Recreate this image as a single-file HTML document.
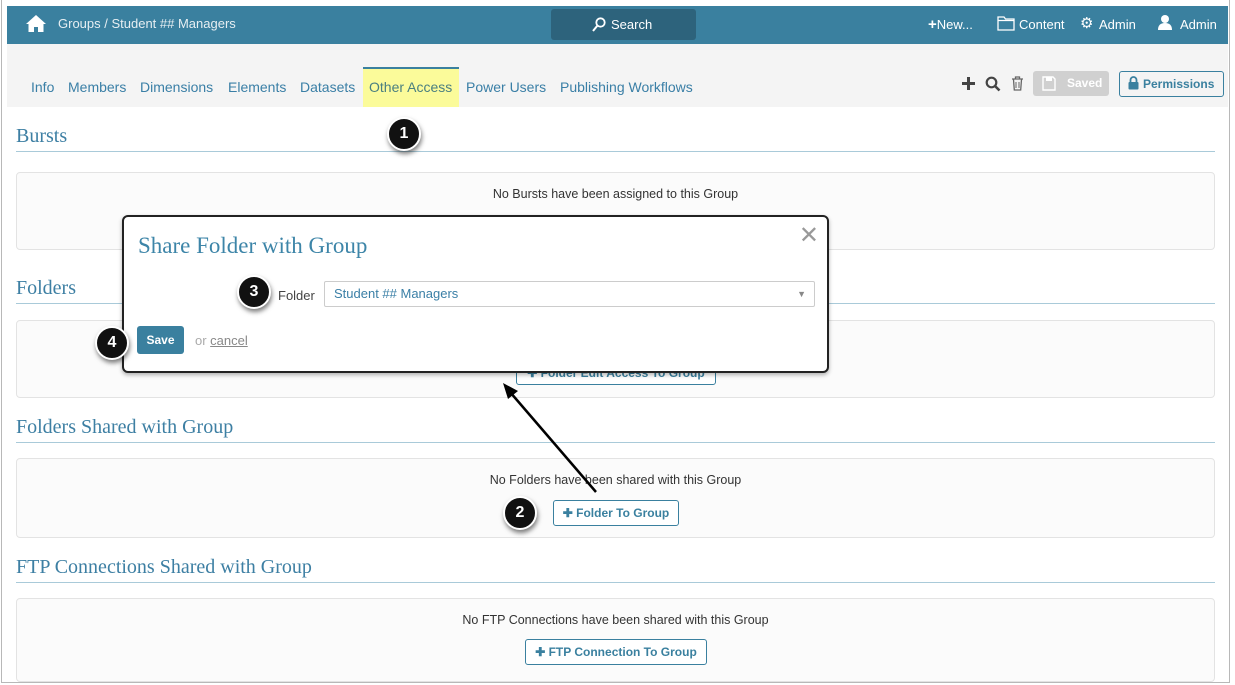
<!DOCTYPE html>
<html><head><meta charset="utf-8"><style>
*{box-sizing:border-box;margin:0;padding:0}
body{width:1235px;height:685px;background:#fff;font-family:"Liberation Sans",sans-serif;position:relative;overflow:hidden}
.frame{position:absolute;left:1px;top:0;width:1229px;height:683px;border:1px solid #b8b8b8;border-top:none;background:#fff}
.hdr{position:absolute;left:7px;top:6px;width:1221px;height:38px;background:#3a809f;color:#fff;font-size:13px}
.tabs{position:absolute;left:7px;top:44px;width:1221px;height:63px;background:#f4f4f4}
.tab{position:absolute;top:79px;font-size:14px;color:#3a7fa6}
.sec{position:absolute;left:16px;font-family:"Liberation Serif",serif;font-size:20px;color:#3d7fa3}
.line{position:absolute;left:16px;width:1199px;height:1px;background:#a9cad9}
.panel{position:absolute;left:16px;width:1199px;border:1px solid #e3e3e3;border-radius:4px;background:#fbfbfb}
.msg{position:absolute;width:100%;text-align:center;font-size:12.5px;color:#333}
.btn{position:absolute;border:1px solid #3a809f;border-radius:3px;background:#fff;color:#3a809f;font-size:12px;font-weight:bold;text-align:center;line-height:24px;height:26px}
.num{position:absolute;width:34px;height:34px;border-radius:50%;background:#111;border:2px solid #fff;box-shadow:1px 3px 5px rgba(0,0,0,.5);color:#fff;font-weight:bold;font-size:16px;text-align:center;line-height:30px}
</style></head><body>
<div class="frame"></div>
<div class="hdr">
<svg style="position:absolute;left:18px;top:8px" width="22" height="19" viewBox="0 0 22 19"><path d="M11 1 L1 10 L3.5 10 L3.5 18 L9 18 L9 13 L13 13 L13 18 L18.5 18 L18.5 10 L21 10 Z" fill="#fff"/></svg>
<span style="position:absolute;left:51px;top:10px;color:#e6eef2">Groups / Student ## Managers</span>
<div style="position:absolute;left:544px;top:3px;width:145px;height:31px;background:#2d637c;border-radius:3px"></div>
<svg style="position:absolute;left:585px;top:11px" width="14" height="15" viewBox="0 0 14 15"><circle cx="8.5" cy="5.5" r="4.2" fill="none" stroke="#fff" stroke-width="1.8"/><line x1="5.5" y1="8.5" x2="1" y2="14" stroke="#fff" stroke-width="2"/></svg>
<span style="position:absolute;left:604px;top:11px">Search</span>
<span style="position:absolute;left:921px;top:10px"><b style="font-size:15px">+</b>New...</span>
<svg style="position:absolute;left:990px;top:10px" width="18" height="15" viewBox="0 0 18 15"><path d="M1 1 H7 L8.5 3 H17 V14 H1 Z M1 4.5 H17" fill="none" stroke="#fff" stroke-width="1.3"/></svg>
<span style="position:absolute;left:1012px;top:11px">Content</span>
<span style="position:absolute;left:1073px;top:8px;font-size:15px">⚙</span><span style="position:absolute;left:1092px;top:11px">Admin</span>
<svg style="position:absolute;left:1150px;top:8px" width="16" height="17" viewBox="0 0 16 17"><circle cx="8" cy="5" r="4" fill="#fff"/><path d="M1 16 Q1 9 8 9 Q15 9 15 16 Z" fill="#fff"/></svg>
<span style="position:absolute;left:1173px;top:11px">Admin</span>
</div>
<div class="tabs"></div>
<div style="position:absolute;left:363px;top:67px;width:96px;height:40px;background:#fbfb9a;border-top:2px solid #3a809f"></div>
<span class="tab" style="left:31px">Info</span><span class="tab" style="left:68px">Members</span><span class="tab" style="left:140px">Dimensions</span><span class="tab" style="left:228px">Elements</span><span class="tab" style="left:300px">Datasets</span><span class="tab" style="left:369px;color:#4a7f80">Other Access</span><span class="tab" style="left:466px">Power Users</span><span class="tab" style="left:560px">Publishing Workflows</span>
<svg style="position:absolute;left:962px;top:77px" width="13" height="13"><path d="M6.5 0V13M0 6.5H13" stroke="#444" stroke-width="3"/></svg>
<svg style="position:absolute;left:985px;top:76px" width="16" height="16"><circle cx="6.5" cy="6.5" r="4.8" fill="none" stroke="#444" stroke-width="2.2"/><line x1="10" y1="10" x2="14.5" y2="14.5" stroke="#444" stroke-width="2.6"/></svg>
<svg style="position:absolute;left:1011px;top:76px" width="13" height="15"><path d="M1 3H12M4.5 3V1H8.5V3M2.5 3.5L3.3 14H9.7L10.5 3.5" fill="none" stroke="#666" stroke-width="1.3"/><path d="M5 6V12M8 6V12" stroke="#666"/></svg>
<div style="position:absolute;left:1033px;top:71px;width:76px;height:25px;background:#d0d0d0;border-radius:3px;color:#fff;font-size:12px;font-weight:bold;line-height:25px;padding-left:34px">Saved</div>
<svg style="position:absolute;left:1042px;top:76px" width="14" height="15"><path d="M1 1H11L13 3V14H1Z" fill="none" stroke="#fff" stroke-width="1.4"/><rect x="4" y="1" width="6" height="4" fill="#fff"/></svg>
<div style="position:absolute;left:1119px;top:71px;width:105px;height:26px;border:1px solid #3a809f;border-radius:3px;color:#3a809f;font-size:12px;font-weight:bold;line-height:24px;padding-left:23px">Permissions</div>
<svg style="position:absolute;left:1128px;top:76px" width="11" height="14"><path d="M2.5 6V4A3 3 0 0 1 8.5 4V6" fill="none" stroke="#3a809f" stroke-width="1.8"/><rect x="0.5" y="6" width="10" height="7.5" rx="1" fill="#3a809f"/></svg>

<div class="sec" style="top:125px">Bursts</div><div class="line" style="top:151px"></div>
<div class="panel" style="top:172px;height:78px"><div class="msg" style="top:14px">No Bursts have been assigned to this Group</div></div>
<div class="sec" style="top:277px">Folders</div><div class="line" style="top:303px"></div>
<div class="panel" style="top:320px;height:78px"></div>
<div class="btn" style="left:516px;top:360px;width:200px;height:25px">✚ Folder Edit Access To Group</div>
<div class="sec" style="top:416px">Folders Shared with Group</div><div class="line" style="top:442px"></div>
<div class="panel" style="top:458px;height:80px"><div class="msg" style="top:14px">No Folders have been shared with this Group</div></div>
<div class="btn" style="left:553px;top:500px;width:126px">✚ Folder To Group</div>
<div class="sec" style="top:556px">FTP Connections Shared with Group</div><div class="line" style="top:582px"></div>
<div class="panel" style="top:598px;height:84px"><div class="msg" style="top:14px">No FTP Connections have been shared with this Group</div></div>
<div class="btn" style="left:525px;top:639px;width:182px">✚ FTP Connection To Group</div>

<div style="position:absolute;left:122px;top:215px;width:707px;height:158px;background:#fff;border:2px solid #222;border-radius:6px;box-shadow:0 2px 4px rgba(0,0,0,.3)">
<div style="position:absolute;left:14px;top:16px;font-family:'Liberation Serif',serif;font-size:23px;color:#3d85a8">Share Folder with Group</div>
<div style="position:absolute;right:8px;top:4px;font-size:24px;color:#999">✕</div>
<span style="position:absolute;left:154px;top:71px;font-size:13px;color:#444">Folder</span>
<div style="position:absolute;left:200px;top:64px;width:491px;height:26px;border:1px solid #ccc;border-radius:2px;font-size:13px;color:#3a7fa6;line-height:24px;padding-left:9px">Student ## Managers<span style="position:absolute;right:8px;top:0;color:#888;font-size:9px">▼</span></div>
<div style="position:absolute;left:13px;top:109px;width:47px;height:28px;background:#3a809f;border-radius:3px;color:#fff;font-size:12px;font-weight:bold;text-align:center;line-height:28px">Save</div>
<span style="position:absolute;left:71px;top:116px;font-size:13px;color:#aaa">or <u style="color:#888">cancel</u></span>
</div>

<svg style="position:absolute;left:0;top:0" width="1235" height="685"><line x1="596" y1="492" x2="510" y2="392" stroke="#000" stroke-width="2.5"/><path d="M503 383 L518 391 L508 399 Z" fill="#000"/></svg>
<div class="num" style="left:387px;top:117px">1</div>
<div class="num" style="left:503px;top:496px">2</div>
<div class="num" style="left:237px;top:275px">3</div>
<div class="num" style="left:95px;top:326px">4</div>
</body></html>
